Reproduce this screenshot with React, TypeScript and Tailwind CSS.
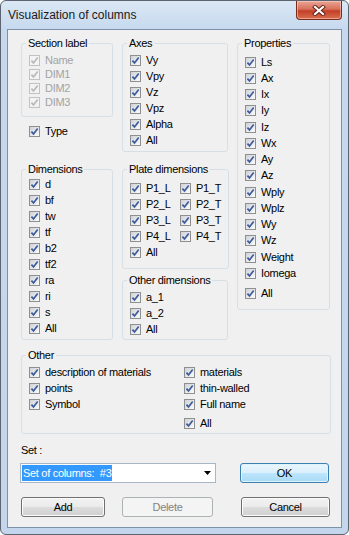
import React from "react";

const ui = "font-['Liberation_Sans',Arial,sans-serif] text-[11px] leading-[13px] tracking-[-0.3px] text-black";

function CheckBox({ disabled }: { disabled?: boolean }) {
  return (
    <span
      className={`flex h-[11px] w-[11px] shrink-0 items-center justify-center border ${
        disabled
          ? "border-[#c2c2c2] bg-[#f3f3f3]"
          : "border-[#8e8f8f] bg-[linear-gradient(135deg,#cfd2d7,#fbfbfb)]"
      }`}
    >
      <svg width="9" height="9" viewBox="0 0 9 9">
        <path
          d="M1.4 4.6 L3.5 6.9 L7.7 1.5"
          fill="none"
          stroke={disabled ? "#b9b9b9" : "#3d5b9b"}
          strokeWidth="1.7"
        />
      </svg>
    </span>
  );
}

interface CheckProps {
  label: string;
  disabled?: boolean;
  h?: string;
  extra?: string;
}

function Check({ label, disabled, h = "h-[16px]", extra = "" }: CheckProps) {
  return (
    <div className={`flex items-center ${h} ${extra}`}>
      <CheckBox disabled={disabled} />
      <span className={`ml-[5px] whitespace-nowrap ${disabled ? "text-[#a3a3a3]" : ""}`}>{label}</span>
    </div>
  );
}

function Group({
  title,
  className,
  children,
}: {
  title: string;
  className: string;
  children: React.ReactNode;
}) {
  return (
    <fieldset className={`rounded-[3px] border border-[#d5dfe5] px-[7px] ${className}`}>
      <legend className="-ml-[3px] px-[2px] leading-[13px]">{title}</legend>
      {children}
    </fieldset>
  );
}

const props = ["Ls", "Ax", "Ix", "Iy", "Iz", "Wx", "Ay", "Az", "Wply", "Wplz", "Wy", "Wz", "Weight", "Iomega"];
const dims = ["d", "bf", "tw", "tf", "b2", "tf2", "ra", "ri", "s", "All"];

const btn =
  "flex h-[20px] items-center justify-center rounded-[3px] border border-[#707070] bg-[linear-gradient(#f2f2f2_0%,#ebebeb_50%,#dddddd_50%,#cfcfcf_100%)] shadow-[inset_0_0_0_1px_#fcfcfc]";

export default function App() {
  return (
    <div className="h-[535px] w-[349px] bg-white">
      <div className="flex h-[535px] w-[349px] flex-col rounded-[6px] border border-[#5b6470] bg-[linear-gradient(#dbe7f4_0px,#c5d8ee_30px,#c3d6ec_100%)]">
        {/* title bar */}
        <div className="flex h-[28px] items-start justify-between">
          <div className="pl-[7px] pt-[7px] font-['Liberation_Sans',Arial,sans-serif] text-[12px] leading-[15px] text-[#1a1a1a]">
            Visualization of columns
          </div>
          <div className="mr-[6px] flex h-[19px] w-[46px] items-center justify-center rounded-b-[4px] border border-t-0 border-[#7b2a20] bg-[linear-gradient(#eaa596_0%,#d8705a_45%,#c33f28_55%,#d86f4e_100%)] shadow-[inset_0_0_0_1px_rgba(255,220,210,0.5)]">
            <svg width="14" height="11" viewBox="0 0 14 11">
              <path d="M3 2 L11 9 M11 2 L3 9" stroke="#5a2018" strokeWidth="4" strokeLinecap="square" />
              <path d="M3 2 L11 9 M11 2 L3 9" stroke="#ffffff" strokeWidth="2.2" strokeLinecap="square" />
            </svg>
          </div>
        </div>

        {/* client area */}
        <div className={`mx-[6px] h-[499px] border border-[#7f91a8] bg-[#f0f0f0] pl-[13px] pt-[7px] ${ui}`}>
          <div className="flex gap-[9px]">
            {/* left column */}
            <div className="flex w-[92px] flex-col">
              <Group title="Section label" className="h-[80px] pt-[3px]">
                <Check label="Name" disabled h="h-[14px]" />
                <Check label="DIM1" disabled h="h-[14px]" />
                <Check label="DIM2" disabled h="h-[14px]" />
                <Check label="DIM3" disabled h="h-[14px]" />
              </Group>
              <Check label="Type" extra="mt-[6px] pl-[8px]" />
              <Group title="Dimensions" className="mt-[24px] h-[177px]">
                {dims.map((d) => (
                  <Check key={d} label={d} />
                ))}
              </Group>
            </div>

            {/* middle column */}
            <div className="flex w-[106px] flex-col">
              <Group title="Axes" className="h-[115px] pt-[2px]">
                {["Vy", "Vpy", "Vz", "Vpz", "Alpha", "All"].map((a) => (
                  <Check key={a} label={a} />
                ))}
              </Group>
              <Group title="Plate dimensions" className="mt-[11px] h-[106px] pt-[4px]">
                <div className="grid grid-cols-[50px_auto]">
                  {[1, 2, 3, 4].map((n) => (
                    <React.Fragment key={n}>
                      <Check label={`P${n}_L`} />
                      <Check label={`P${n}_T`} />
                    </React.Fragment>
                  ))}
                </div>
                <Check label="All" />
              </Group>
              <Group title="Other dimensions" className="mt-[5px] h-[66px] pt-[2px]">
                <Check label="a_1" />
                <Check label="a_2" />
                <Check label="All" />
              </Group>
            </div>

            {/* right column */}
            <div className="flex w-[93px] flex-col">
              <Group title="Properties" className="h-[273px] pt-[4px]">
                {props.map((p) => (
                  <Check key={p} label={p} h="h-[16.25px]" />
                ))}
                <Check label="All" extra="mt-[3.5px]" />
              </Group>
            </div>
          </div>

          <Group title="Other" className="mt-[9px] h-[85px] w-[310px] pt-[2px]">
            <div className="grid grid-cols-[155px_auto]">
              <div className="flex flex-col">
                <Check label="description of materials" />
                <Check label="points" />
                <Check label="Symbol" />
              </div>
              <div className="flex flex-col">
                <Check label="materials" />
                <Check label="thin-walled" />
                <Check label="Full name" />
                <Check label="All" extra="mt-[3px]" />
              </div>
            </div>
          </Group>

          <div className="mt-[10px]">Set :</div>

          <div className="mt-[6px] flex items-start">
            <div className="-ml-[1px] flex h-[20px] w-[196px] items-center border border-[#a9b6c6] bg-white pl-[1px]">
              <span className="whitespace-pre bg-[#3399ff] px-[1px] leading-[16px] text-white">Set of columns:  #3</span>
              <span className="flex-1" />
              <svg width="7" height="4" viewBox="0 0 7 4" className="mr-[4px]">
                <path d="M0 0 H7 L3.5 4 Z" fill="#000" />
              </svg>
            </div>
            <div className="ml-[24px] flex h-[20px] w-[89px] items-center justify-center rounded-[3px] border border-[#3c7fb1] bg-[linear-gradient(#eaf6fd_0%,#d9f0fc_50%,#bee6fd_50%,#a7d9f5_100%)] shadow-[inset_0_0_0_1px_#dff3fd]">
              OK
            </div>
          </div>

          <div className="mt-[14px] flex">
            <div className={`w-[84px] ${btn}`}>Add</div>
            <div className="ml-[17px] flex h-[20px] w-[91px] items-center justify-center rounded-[3px] border border-[#adb2b5] bg-[#f4f4f4] text-[#838383]">
              Delete
            </div>
            <div className={`ml-[28px] w-[89px] ${btn}`}>Cancel</div>
          </div>
        </div>
      </div>
    </div>
  );
}
